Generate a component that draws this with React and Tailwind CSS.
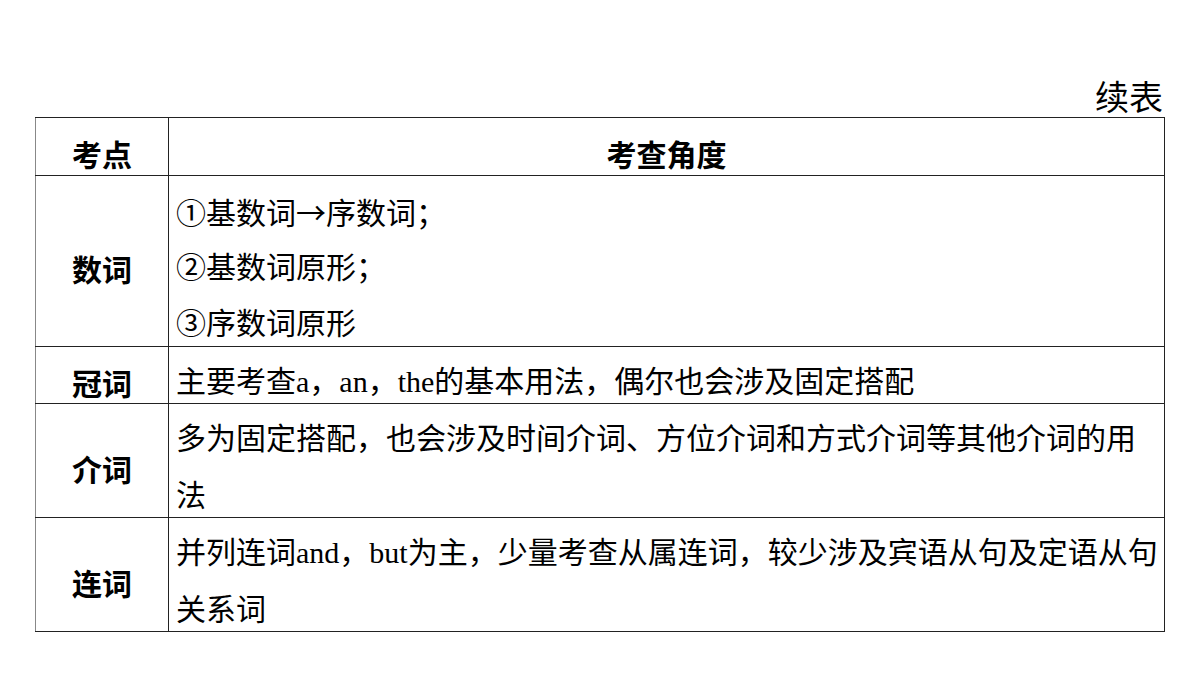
import React from 'react';

// Continued table ("续表") of grammar points and what is examined for each.
const ROWS = [
  {
    point: '数词',
    lines: [
      <>①基数词<span className="font-['Noto_Sans_CJK_SC',sans-serif]">→</span>序数词；</>,
      '②基数词原形；',
      '③序数词原形',
    ],
  },
  { point: '冠词', lines: ['主要考查a，an，the的基本用法，偶尔也会涉及固定搭配'] },
  { point: '介词', lines: ['多为固定搭配，也会涉及时间介词、方位介词和方式介词等其他介词的用', '法'] },
  { point: '连词', lines: ['并列连词and，but为主，少量考查从属连词，较少涉及宾语从句及定语从句', '关系词'] },
];

export default function App() {
  return (
    <div className="w-[1200px] h-[675px] bg-white pt-[74px] pl-[35px] text-black">
      <div className="w-[1130px] text-right text-[34px] leading-[43px] pr-[2px] font-['Noto_Sans_CJK_SC',sans-serif]">续表</div>
      <table className="w-[1130px] table-fixed border-collapse font-['Noto_Sans_CJK_SC',sans-serif]">
        <colgroup>
          <col className="w-[133px]" />
          <col />
        </colgroup>
        <thead>
          <tr>
            <th className="border border-[#222] border-l-[#888] p-0 text-[30px] font-bold text-center">
              <div className="h-[57px] leading-[57px] pt-[7px]">考点</div>
            </th>
            <th className="border border-[#222] p-0 text-[30px] font-bold text-center">
              <div className="h-[57px] leading-[57px] pt-[7px]">考查角度</div>
            </th>
          </tr>
        </thead>
        <tbody>
          {ROWS.map(r => (
            <tr key={r.point}>
              <td className="border border-[#222] border-l-[#888] p-0 text-[30px] font-bold text-center align-middle">
                <div className="h-[56px] leading-[56px] pt-[7px] box-content -mb-[7px]">{r.point}</div>
              </td>
              <td className="border border-[#222] pl-[7px] pr-[6px] py-0 text-[30px] align-middle font-['Liberation_Serif','Noto_Sans_CJK_SC',serif]">
                <div className="pt-[7px] -mb-[7px]">
                  {r.lines.map((l, i) => (
                    <div key={i} className="h-[56.5px] leading-[56.5px] whitespace-nowrap">{l}</div>
                  ))}
                </div>
              </td>
            </tr>
          ))}
        </tbody>
      </table>
    </div>
  );
}
